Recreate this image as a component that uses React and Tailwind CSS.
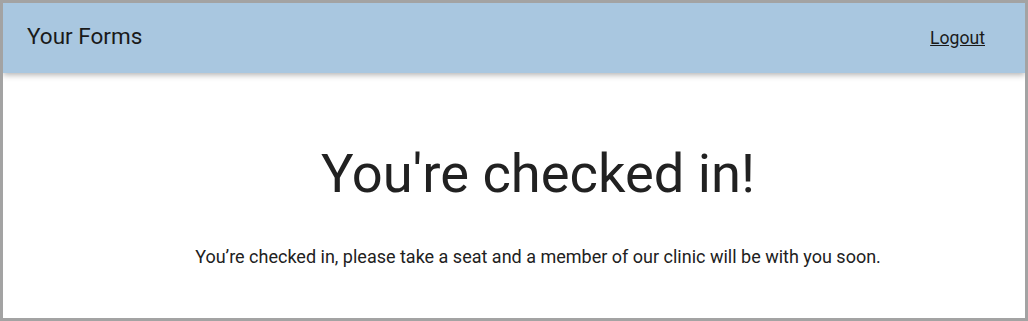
const App = () => {
  return (
    <div
      className="w-[1028px] h-[321px] border-[3px] border-[#a3a3a3] bg-white overflow-hidden"
      style={{ fontFamily: "Roboto, 'Liberation Sans', sans-serif" }}
    >
      <header className="h-[70px] bg-[#a9c7e0] flex items-center justify-between pl-[24px] pr-[40px] shadow-[0_2px_6px_rgba(0,0,0,0.3)] relative">
        <h1 className="text-[22.5px] text-[#1a1a1a] -mt-[2px]">Your Forms</h1>
        <a href="#" className="text-[17.6px] text-[#1a1a1a] underline">
          Logout
        </a>
      </header>

      <main className="flex flex-col items-center pt-[74px] pl-[48px]">
        <h2 className="text-[54.3px] leading-none text-[#212121]">You're checked in!</h2>
        <p className="mt-[42px] text-[18px] text-[#212121]">
          You’re checked in, please take a seat and a member of our clinic will be with you soon.
        </p>
      </main>
    </div>
  )
}

export default App
